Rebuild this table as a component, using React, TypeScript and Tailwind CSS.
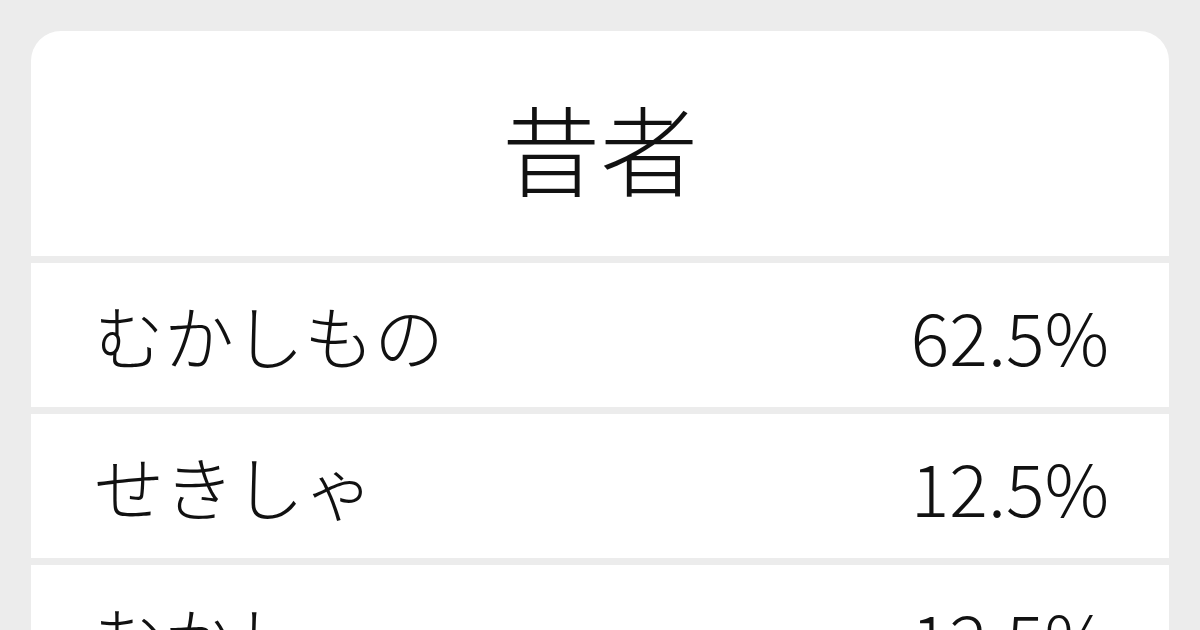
import React from "react";

const readings = [
  { kana: "むかしもの", pct: "62.5%" },
  { kana: "せきしゃ", pct: "12.5%" },
  { kana: "むかし", pct: "12.5%" },
];

const App = () => {
  return (
    <div
      className="w-[1200px] h-[630px] overflow-hidden bg-[#ececec] px-[31px] pt-[31px] text-[#111]"
      style={{ fontFamily: '"Noto Sans CJK JP Light", "Noto Sans CJK JP", "Noto Sans", sans-serif' }}
    >
      <div className="flex flex-col gap-[7px] rounded-t-[30px] overflow-hidden">
        {/* title */}
        <div className="h-[225px] bg-white flex items-center justify-center pt-[4px]">
          <span className="text-[98px] font-light leading-none">昔者</span>
        </div>

        {/* readings */}
        {readings.map((r) => (
          <div
            key={r.kana}
            className="h-[144px] shrink-0 bg-white flex items-center justify-between pl-[63px] pr-[60px]"
          >
            <span className="text-[70px] font-light leading-none">{r.kana}</span>
            <span className="text-[72px] font-light leading-none">{r.pct}</span>
          </div>
        ))}
      </div>
    </div>
  );
};

export default App;
